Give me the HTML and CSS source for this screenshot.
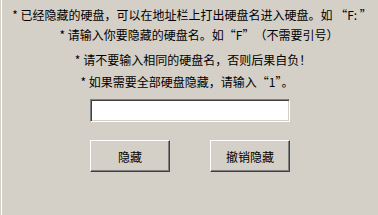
FILE: index.html
```html
<!DOCTYPE html>
<html lang="zh-CN">
<head>
    <meta charset="UTF-8">
    <title>隐藏硬盘</title>
    <link rel="stylesheet" href="styles.css">
</head>
<body>
    <div class="dialog">
        <p class="tip tip-1">* 已经隐藏的硬盘，可以在地址栏上打出硬盘名进入硬盘。如 <span class="q q-open">“</span>F: <span class="q q-close">”</span></p>
        <p class="tip tip-2">* 请输入你要隐藏的硬盘名。如<span class="q q-open">“</span>F<span class="q q-close">”</span>（不需要引号）</p>
        <p class="tip tip-3">* 请不要输入相同的硬盘名，否则后果自负！</p>
        <p class="tip tip-4">* 如果需要全部硬盘隐藏，请输入“1”。</p>
        <input type="text" class="drive-input" id="driveName">
        <div class="actions">
            <button class="btn" id="hideButton">隐藏</button>
            <button class="btn" id="showButton">撤销隐藏</button>
        </div>
    </div>
</body>
</html>
```

FILE: styles.css
```css
:root {
    --face: #d4d0c8;
    --light: #ffffff;
    --shadow: #808080;
    --dark: #404040;
}

body {
    margin: 0;
    background-color: var(--face);
    font-family: "Noto Sans CJK SC", "Liberation Serif", serif;
    font-size: 12px;
    color: #000;
}

.dialog {
    margin-left: 1px;
    border-left: 1px solid var(--light);
    height: 215px;
    box-sizing: border-box;
    display: flex;
    flex-direction: column;
    align-items: center;
    padding-top: 7px;
}

.tip {
    margin: 0;
    line-height: 16px;
    white-space: nowrap;
}
.tip-1 {
    padding-left: 4px;
}
.tip-2 {
    margin-top: 4px;
    padding-left: 18px;
}
.tip-3 {
    margin-top: 9px;
    padding-left: 6px;
}
.tip-4 {
    margin-top: 6px;
    padding-right: 6px;
}

/* full-width quote cells */
.q {
    display: inline-block;
    width: 12px;
}
.q-open {
    text-align: right;
}
.q-close {
    text-align: left;
}

.drive-input {
    margin-top: 9px;
    width: 200px;
    height: 23px;
    box-sizing: border-box;
    background: #fff;
    border: 1px solid;
    border-color: var(--shadow) var(--light) var(--light) var(--shadow);
    box-shadow: inset 1px 1px var(--dark), inset -1px -1px var(--face);
    outline: none;
    padding: 2px 3px;
    font: inherit;
}

.actions {
    margin-top: 18px;
    display: flex;
    gap: 40px;
}

.btn {
    width: 80px;
    height: 32px;
    box-sizing: border-box;
    background-color: var(--face);
    border: 1px solid;
    border-color: var(--light) var(--dark) var(--dark) var(--light);
    box-shadow: inset -1px -1px var(--shadow);
    font: inherit;
    color: #000;
    padding: 0;
    cursor: pointer;
}
```
